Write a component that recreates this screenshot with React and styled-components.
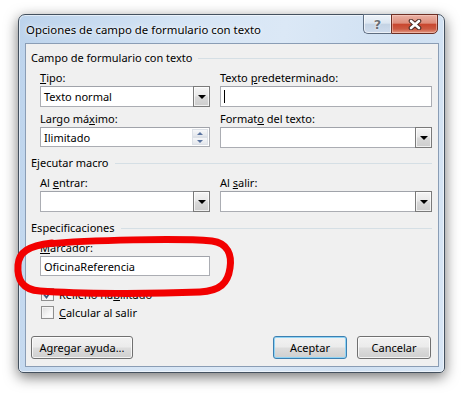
import React from "react";
import styled, { createGlobalStyle, css } from "styled-components";

const GlobalStyle = createGlobalStyle`
  html, body { margin: 0; padding: 0; background: #ffffff; }
  body { font-family: "Noto Sans", "Open Sans", sans-serif; font-size: 11px; color: #000; }
  * { box-sizing: border-box; }
`;

const Stage = styled.div`
  position: relative;
  width: 465px;
  height: 393px;
  padding: 14px 0 0 18px;
`;

const Window = styled.div`
  width: 427px;
  height: 359px;
  border: 1px solid #44515f;
  border-radius: 7px 7px 5px 5px;
  background: linear-gradient(100deg, #bcd3ec 0%, #d6e5f5 35%, #dbe8f6 55%, #cfe0f2 80%, #d8e6f5 100%);
  box-shadow: 0 4px 14px rgba(0, 0, 0, 0.55), inset 0 0 0 1px rgba(255, 255, 255, 0.55);
  display: flex;
  flex-direction: column;
`;

const TitleBar = styled.div`
  height: 28px;
  display: flex;
  align-items: flex-start;
`;

const TitleText = styled.div`
  margin: 6px 0 0 7px;
  font-size: 11.4px;
  line-height: 17px;
  white-space: nowrap;
  text-shadow: 0 0 6px rgba(255, 255, 255, 0.95), 0 0 2px rgba(255, 255, 255, 0.9);
`;

const Captions = styled.div`
  margin: -1px 6px 0 auto;
  display: flex;
`;

const CaptionButton = styled.div`
  height: 20px;
  display: flex;
  align-items: center;
  justify-content: center;
  border: 1px solid #5e6d80;
  ${(p) =>
    p.$close
      ? css`
          width: 47px;
          border-color: #6d2f24;
          border-radius: 0 0 5px 0;
          background: linear-gradient(#eab1a4 0%, #de8d7b 45%, #c8472f 52%, #cc5a42 78%, #e39a85 100%);
          box-shadow: inset 0 0 0 1px rgba(255, 220, 210, 0.45);
        `
      : css`
          width: 28px;
          border-right: none;
          border-radius: 0 0 0 5px;
          background: linear-gradient(#eef3f9 0%, #dce6f1 45%, #c4d3e4 52%, #cfdced 100%);
          box-shadow: inset 0 0 0 1px rgba(255, 255, 255, 0.6);
        `}
`;

const HelpGlyph = styled.span`
  font-family: "DejaVu Sans", sans-serif;
  font-weight: bold;
  font-size: 13px;
  color: #6a6f76;
  text-shadow: 0 0 1px #fff, 0 0 2px #fff;
  line-height: 1;
`;

const Client = styled.div`
  flex: 1;
  margin: 0 5px 5px 6px;
  border: 1px solid #8a9db5;
  background: #f0f0f0;
  padding: 7px 6px 0 5px;
  display: flex;
  flex-direction: column;
`;

const Group = styled.div`
  margin-top: ${(p) => p.$top || 0}px;
`;

const GroupHeader = styled.div`
  display: flex;
  align-items: center;
  height: 14px;
  line-height: 14px;
  &::after {
    content: "";
    flex: 1;
    height: 1px;
    background: #d5dfe5;
    margin-left: 6px;
    margin-top: 1px;
  }
`;

const FieldGrid = styled.div`
  margin: 6px 0 0 9px;
  display: grid;
  grid-template-columns: 170px 212px;
  column-gap: 10px;
  row-gap: 5px;
`;

const Field = styled.div`
  display: flex;
  flex-direction: column;
`;

const Label = styled.div`
  height: 15px;
  line-height: 14px;
  white-space: nowrap;
`;

const Box = styled.div`
  height: ${(p) => p.$h || 21}px;
  border: 1px solid #abadb3;
  border-top-color: #a0a3aa;
  background: #fff;
  display: flex;
  align-items: stretch;
  padding: 0 0 0 3px;
  position: relative;
`;

const BoxText = styled.div`
  flex: 1;
  display: flex;
  align-items: center;
  white-space: nowrap;
`;

const Caret = styled.span`
  display: inline-block;
  width: 1px;
  height: 13px;
  background: #000;
`;

const DropButton = styled.div`
  width: 17px;
  border: 1px solid #7a7a7a;
  margin: -1px -1px -1px 0;
  background: linear-gradient(#f5f5f5 0%, #e8e8e8 48%, #d9d9d9 52%, #cdcdcd 100%);
  box-shadow: inset 0 0 0 1px rgba(255, 255, 255, 0.7);
  display: flex;
  align-items: center;
  justify-content: center;
  &::after {
    content: "";
    border-left: 4px solid transparent;
    border-right: 4px solid transparent;
    border-top: 4px solid #000;
    margin-top: 1px;
  }
`;

const Spinner = styled.div`
  width: 16px;
  margin: 1px 1px 1px 0;
  display: flex;
  flex-direction: column;
`;

const SpinHalf = styled.div`
  flex: 1;
  border: 1px solid #dde1e7;
  background: linear-gradient(#f6f7f9, #e4e7ec);
  display: flex;
  align-items: center;
  justify-content: center;
  &::after {
    content: "";
    border-left: 3px solid transparent;
    border-right: 3px solid transparent;
    ${(p) => (p.$down ? "border-top: 3px solid #5a74a0;" : "border-bottom: 3px solid #5a74a0;")}
  }
`;

const Checks = styled.div`
  margin: 11px 0 0 10px;
  display: flex;
  flex-direction: column;
  gap: 4px;
`;

const CheckRow = styled.div`
  display: flex;
  align-items: center;
  height: 14px;
  gap: 5px;
`;

const CheckBox = styled.div`
  width: 13px;
  height: 13px;
  border: 1px solid #8f8f8f;
  background: linear-gradient(135deg, #dcdcdc 0%, #f6f6f6 60%, #ffffff 100%);
  box-shadow: inset 0 0 0 1px #f4f4f4;
  display: flex;
  align-items: center;
  justify-content: center;
`;

const ButtonRow = styled.div`
  margin: 17px 1px 0 0;
  display: flex;
  align-items: center;
  gap: 10px;
`;

const PushButton = styled.div`
  width: ${(p) => p.$w}px;
  height: 23px;
  border: 1px solid ${(p) => (p.$default ? "#3c7fb1" : "#707070")};
  border-radius: 3px;
  background: linear-gradient(#f2f2f2 0%, #ebebeb 48%, #dddddd 52%, #cfcfcf 100%);
  box-shadow: inset 0 0 0 1px ${(p) => (p.$default ? "#8fd3f4" : "rgba(255,255,255,0.75)")};
  display: flex;
  align-items: center;
  justify-content: center;
  white-space: nowrap;
  ${(p) => p.$push && "margin-left: auto;"}
`;

const Overlay = styled.svg`
  position: absolute;
  left: 0;
  top: 0;
  pointer-events: none;
`;

function Dropdown({ value }) {
  return (
    <Box>
      <BoxText>{value}</BoxText>
      <DropButton />
    </Box>
  );
}

export default function App() {
  return (
    <>
      <GlobalStyle />
      <Stage>
        <Window>
          <TitleBar>
            <TitleText>Opciones de campo de formulario con texto</TitleText>
            <Captions>
              <CaptionButton>
                <HelpGlyph>?</HelpGlyph>
              </CaptionButton>
              <CaptionButton $close>
                <svg width="14" height="11" viewBox="0 0 14 11">
                  <path d="M3 2 L11 9 M11 2 L3 9" stroke="#4a2a24" strokeWidth="4.6" strokeLinecap="round" fill="none" />
                  <path d="M3 2 L11 9 M11 2 L3 9" stroke="#ffffff" strokeWidth="2.6" strokeLinecap="round" fill="none" />
                </svg>
              </CaptionButton>
            </Captions>
          </TitleBar>
          <Client>
            <Group>
              <GroupHeader>Campo de formulario con texto</GroupHeader>
              <FieldGrid>
                <Field>
                  <Label><u>T</u>ipo:</Label>
                  <Dropdown value="Texto normal" />
                </Field>
                <Field>
                  <Label>Texto <u>p</u>redeterminado:</Label>
                  <Box>
                    <BoxText><Caret /></BoxText>
                  </Box>
                </Field>
                <Field>
                  <Label>Largo má<u>x</u>imo:</Label>
                  <Box $h={20}>
                    <BoxText>Ilimitado</BoxText>
                    <Spinner>
                      <SpinHalf />
                      <SpinHalf $down />
                    </Spinner>
                  </Box>
                </Field>
                <Field>
                  <Label>Format<u>o</u> del texto:</Label>
                  <Dropdown value="" />
                </Field>
              </FieldGrid>
            </Group>
            <Group $top={8}>
              <GroupHeader>Ejecutar macro</GroupHeader>
              <FieldGrid>
                <Field>
                  <Label>Al <u>e</u>ntrar:</Label>
                  <Dropdown value="" />
                </Field>
                <Field>
                  <Label>Al <u>s</u>alir:</Label>
                  <Dropdown value="" />
                </Field>
              </FieldGrid>
            </Group>
            <Group $top={9}>
              <GroupHeader>Especificaciones</GroupHeader>
              <FieldGrid>
                <Field>
                  <Label><u>M</u>arcador:</Label>
                  <Box $h={20}>
                    <BoxText>OficinaReferencia</BoxText>
                  </Box>
                </Field>
              </FieldGrid>
              <Checks>
                <CheckRow>
                  <CheckBox>
                    <svg width="9" height="9" viewBox="0 0 9 9">
                      <path d="M1 4.5 L3.5 7.5 L8 1" stroke="#3f5a80" strokeWidth="1.8" fill="none" />
                    </svg>
                  </CheckBox>
                  <span>Relleno ha<u>b</u>ilitado</span>
                </CheckRow>
                <CheckRow>
                  <CheckBox />
                  <span><u>C</u>alcular al salir</span>
                </CheckRow>
              </Checks>
            </Group>
            <ButtonRow>
              <PushButton $w={102}>A<u>g</u>regar ayuda...</PushButton>
              <PushButton $w={74} $default $push>Aceptar</PushButton>
              <PushButton $w={74}>Cancelar</PushButton>
            </ButtonRow>
          </Client>
        </Window>
        <Overlay width="465" height="393" viewBox="0 0 465 393">
          <path
            d="M45 244 C90 240, 180 238, 212 241 C228 243, 232 255, 230 268 C228 283, 220 291, 200 292 C150 294, 80 294, 40 291 C22 290, 17 279, 18 265 C19 252, 28 246, 52 243"
            stroke="#f20000"
            strokeWidth="7"
            strokeLinecap="round"
            strokeLinejoin="round"
            fill="none"
          />
        </Overlay>
      </Stage>
    </>
  );
}
